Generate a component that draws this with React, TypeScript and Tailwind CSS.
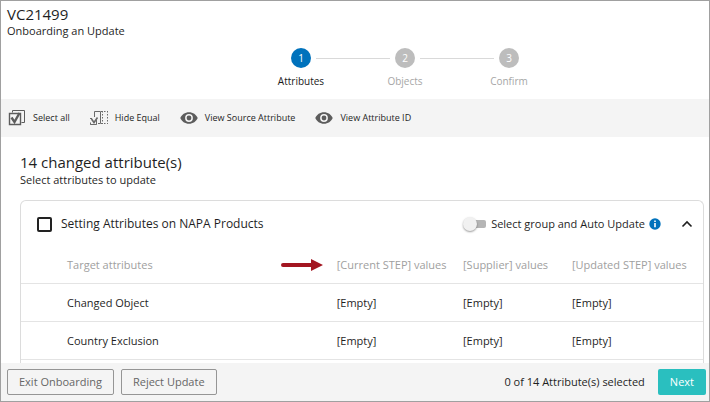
import React from 'react';

interface AttributeRow {
  name: string;
  current: string;
  supplier: string;
  updated: string;
}

const steps = ['Attributes', 'Objects', 'Confirm'];

const rows: AttributeRow[] = [
  { name: 'Changed Object', current: '[Empty]', supplier: '[Empty]', updated: '[Empty]' },
  { name: 'Country Exclusion', current: '[Empty]', supplier: '[Empty]', updated: '[Empty]' },
];

const SelectAllIcon = () => (
  <svg width="18" height="18" viewBox="0 0 18 18" fill="none" stroke="#5c5c5c" aria-hidden="true">
    <path d="M4.5 3.5v-2h12v12h-3" />
    <path d="M1.5 4.5h11v11h-11z" strokeWidth="1.4" />
    <path d="M3.5 8.5l3 4.5L11.5 4" strokeWidth="2.4" />
  </svg>
);

const HideEqualIcon = () => (
  <svg width="18" height="18" viewBox="0 0 18 18" fill="none" stroke="#6b6b6b" aria-hidden="true">
    <path d="M4.5 8v-5.5h6v12H8" />
    <path d="M0 9.5h2M6.5 11v4.5h-6v-2M0.5 15.5h6" />
    <path d="M1.5 10l2.5 3.500L7.500 8.500" strokeWidth="1.6" />
    <path d="M11 2.5h7M11 14.5h7M12.5 2v13M17.5 2v13" strokeDasharray="1.5 1.5" />
  </svg>
);

const EyeIcon = () => (
  <svg width="18" height="18" viewBox="0 0 18 18" aria-hidden="true">
    <path
      fill="#5c5c5c"
      fillRule="evenodd"
      d="M9 3.2C5 3.2 1.7 5.6 0.3 9c1.4 3.4 4.7 5.8 8.7 5.8s7.3-2.4 8.7-5.8C16.3 5.6 13 3.2 9 3.2zM9 12.9A3.9 3.9 0 1 1 9 5.1a3.9 3.9 0 0 1 0 7.8z"
    />
    <circle cx="9" cy="9" r="2.4" fill="#5c5c5c" />
  </svg>
);

const InfoIcon = () => (
  <svg width="12" height="12" viewBox="0 0 12 12" aria-hidden="true">
    <circle cx="6" cy="6" r="5.7" fill="#0072bc" />
    <path d="M5.2 2.5h1.6v1.6H5.2zM5.2 5h1.6v4.3H5.2z" fill="#ffffff" />
  </svg>
);

const ArrowIcon = () => (
  <svg width="42" height="12" viewBox="0 0 42 12" aria-hidden="true">
    <path d="M2 4h28V0l12 6-12 6V8H2a2 2 0 0 1 0-4z" fill="#a31621" />
  </svg>
);

const tools = [
  { label: 'Select all', Icon: SelectAllIcon },
  { label: 'Hide Equal', Icon: HideEqualIcon },
  { label: 'View Source Attribute', Icon: EyeIcon },
  { label: 'View Attribute ID', Icon: EyeIcon },
];

const Stepper: React.FC<{ active: number }> = ({ active }) => (
  <ol className="flex justify-center pl-[100px]">
    {steps.map((step, index) => (
      <li key={step} className="flex w-[104px] flex-col items-center gap-[3px]">
        <div className="flex w-full items-center gap-[5px]">
          <span className={index > 0 ? 'h-px flex-1 bg-[#d9d9d9]' : 'h-px flex-1'} />
          <span
            className={`flex size-5 items-center justify-center rounded-full text-[10px] text-white ${
              index === active ? 'bg-[#0072bc]' : 'bg-[#bdbdbd]'
            }`}
          >
            {index + 1}
          </span>
          <span className={index < steps.length - 1 ? 'h-px flex-1 bg-[#d9d9d9]' : 'h-px flex-1'} />
        </div>
        <span className={`text-[10px] leading-5 ${index === active ? 'text-[#1a1a1a]' : 'text-[#a6a6a6]'}`}>
          {step}
        </span>
      </li>
    ))}
  </ol>
);

const App: React.FC = () => {
  return (
    <div className="flex h-screen flex-col overflow-hidden border border-[#a0a0a0] bg-white font-['Open_Sans','Noto_Sans',sans-serif] text-[#1f1f1f]">
      <header className="shrink-0 px-1.5 pt-1 pb-2">
        <h1 className="text-[15px] leading-[18px]">VC21499</h1>
        <p className="text-[11px] leading-4">Onboarding an Update</p>
        <div className="pt-[9px]">
          <Stepper active={0} />
        </div>
      </header>

      <div className="flex h-[38px] shrink-0 items-center gap-5 bg-[#f4f4f4] px-[7px]">
        {tools.map(({ label, Icon }) => (
          <button key={label} type="button" className="flex items-center gap-[7px] text-[9px] leading-4 whitespace-nowrap">
            <Icon />
            {label}
          </button>
        ))}
      </div>

      <main className="flex min-h-0 flex-1 flex-col pt-[15px] pr-[5px] pl-[19px]">
        <h2 className="text-[15px] leading-5">14 changed attribute(s)</h2>
        <p className="text-[11px] leading-4">Select attributes to update</p>

        <section className="mt-3 flex-1 rounded-t-md border border-b-0 border-[#dcdcdc]">
          <div className="flex h-[46px] items-center pr-[10px] pl-4">
            <label className="flex items-center gap-[9px] text-[12px]">
              <input
                type="checkbox"
                className="size-[15px] appearance-none rounded-xs border-2 border-[#222222] bg-white checked:bg-[#0072bc]"
              />
              Setting Attributes on NAPA Products
            </label>
            <label className="ml-auto flex items-center gap-[5px] text-[11px]">
              <span className="flex h-4 w-[23px] items-center">
                <input type="checkbox" role="switch" className="peer sr-only" />
                <span className="z-10 size-[14px] rounded-full bg-[#f1f1f1] shadow-[0_1px_2px_#00000066]" />
                <span className="-ml-[5px] h-2 flex-1 rounded-r-xs bg-[#b5b5b5]" />
              </span>
              Select group and Auto Update
            </label>
            <button type="button" aria-label="More about Auto Update" className="ml-1">
              <InfoIcon />
            </button>
            <button type="button" aria-label="Collapse group" className="ml-5">
              <svg width="12" height="8" viewBox="0 0 12 8" fill="none" stroke="#1f1f1f" strokeWidth="1.6">
                <path d="M1.5 6.5L6 2l4.5 4.5" />
              </svg>
            </button>
          </div>

          <table className="w-full table-fixed text-left text-[11px] leading-4">
            <colgroup>
              <col className="w-[46%]" />
              <col />
              <col className="w-[109px]" />
              <col className="w-[131px]" />
            </colgroup>
            <thead className="text-[#a0a0a0]">
              <tr className="h-9 border-b border-[#e4e4e4]">
                <th className="pr-3 pl-[46px] font-normal">
                  <span className="flex items-center justify-between">
                    Target attributes
                    <ArrowIcon />
                  </span>
                </th>
                <th className="pl-0.5 font-normal whitespace-nowrap">[Current STEP] values</th>
                <th className="font-normal whitespace-nowrap">[Supplier] values</th>
                <th className="font-normal whitespace-nowrap">[Updated STEP] values</th>
              </tr>
            </thead>
            <tbody>
              {rows.map((row) => (
                <tr key={row.name} className="h-[38px] border-b border-[#e4e4e4]">
                  <td className="pt-0.5 pl-[46px]">{row.name}</td>
                  <td className="pt-0.5 pl-0.5">{row.current}</td>
                  <td className="pt-0.5">{row.supplier}</td>
                  <td className="pt-0.5">{row.updated}</td>
                </tr>
              ))}
            </tbody>
          </table>
        </section>
      </main>

      <footer className="flex h-[38px] shrink-0 items-center gap-[7px] bg-[#f4f4f4] pr-[3px] pl-1.5 text-[11px]">
        <button type="button" className="h-[26px] rounded-xs border border-[#959595] px-[11px] text-[#666666]">
          Exit Onboarding
        </button>
        <button type="button" className="h-[26px] rounded-xs border border-[#959595] px-[11px] text-[#666666]">
          Reject Update
        </button>
        <span className="ml-auto">0 of 14 Attribute(s) selected</span>
        <button type="button" className="ml-1.5 h-[26px] rounded-xs bg-[#2abfbf] px-3 text-white">
          Next
        </button>
      </footer>
    </div>
  );
};

export default App;
